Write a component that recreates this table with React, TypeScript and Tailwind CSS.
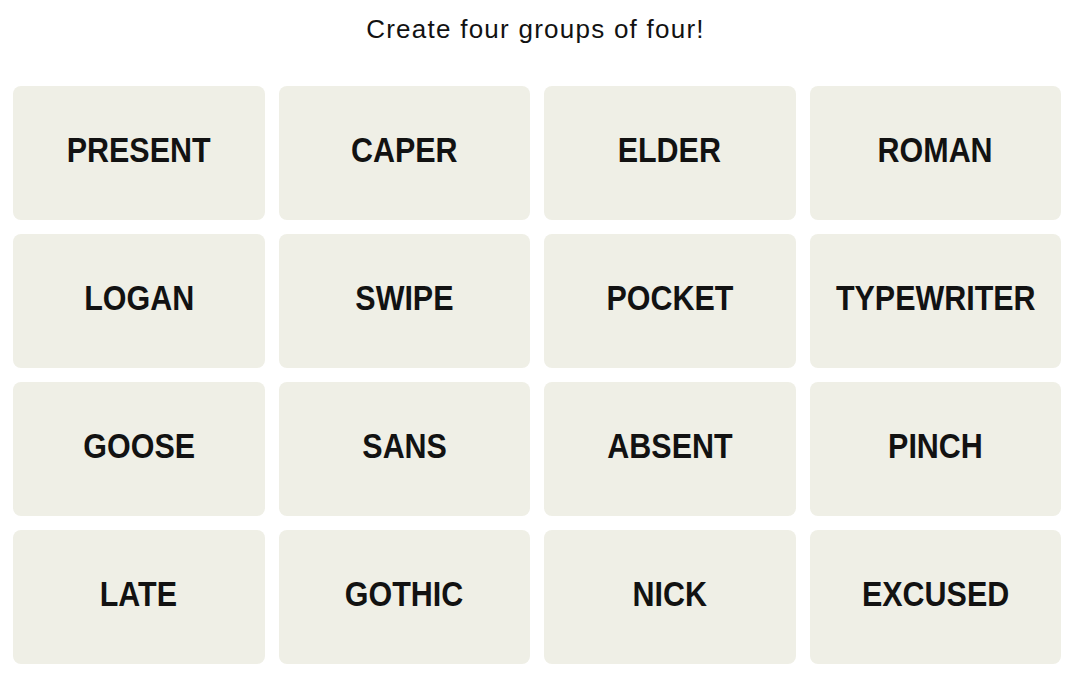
import React from "react";

const words = [
  "PRESENT", "CAPER", "ELDER", "ROMAN",
  "LOGAN", "SWIPE", "POCKET", "TYPEWRITER",
  "GOOSE", "SANS", "ABSENT", "PINCH",
  "LATE", "GOTHIC", "NICK", "EXCUSED",
];

export default function App() {
  return (
    <div className="w-[1071px] h-[675px] bg-white overflow-hidden">
      <div className="pt-[14px] h-[86px] text-center text-[26px] leading-[30px] tracking-[1.25px] text-[#121212] font-['Liberation_Sans',Arial,sans-serif]">
        Create four groups of four!
      </div>
      <div className="ml-[13px] w-[1048px] grid grid-cols-4 gap-[14px]">
        {words.map((w) => (
          <div
            key={w}
            className="h-[134px] rounded-[8px] bg-[#efefe6] flex items-center justify-center pb-[6px]"
          >
            <span className="inline-block scale-x-[0.87] text-[35px] leading-[40px] font-bold text-[#121212] font-['Liberation_Sans',Arial,sans-serif]">
              {w}
            </span>
          </div>
        ))}
      </div>
    </div>
  );
}
